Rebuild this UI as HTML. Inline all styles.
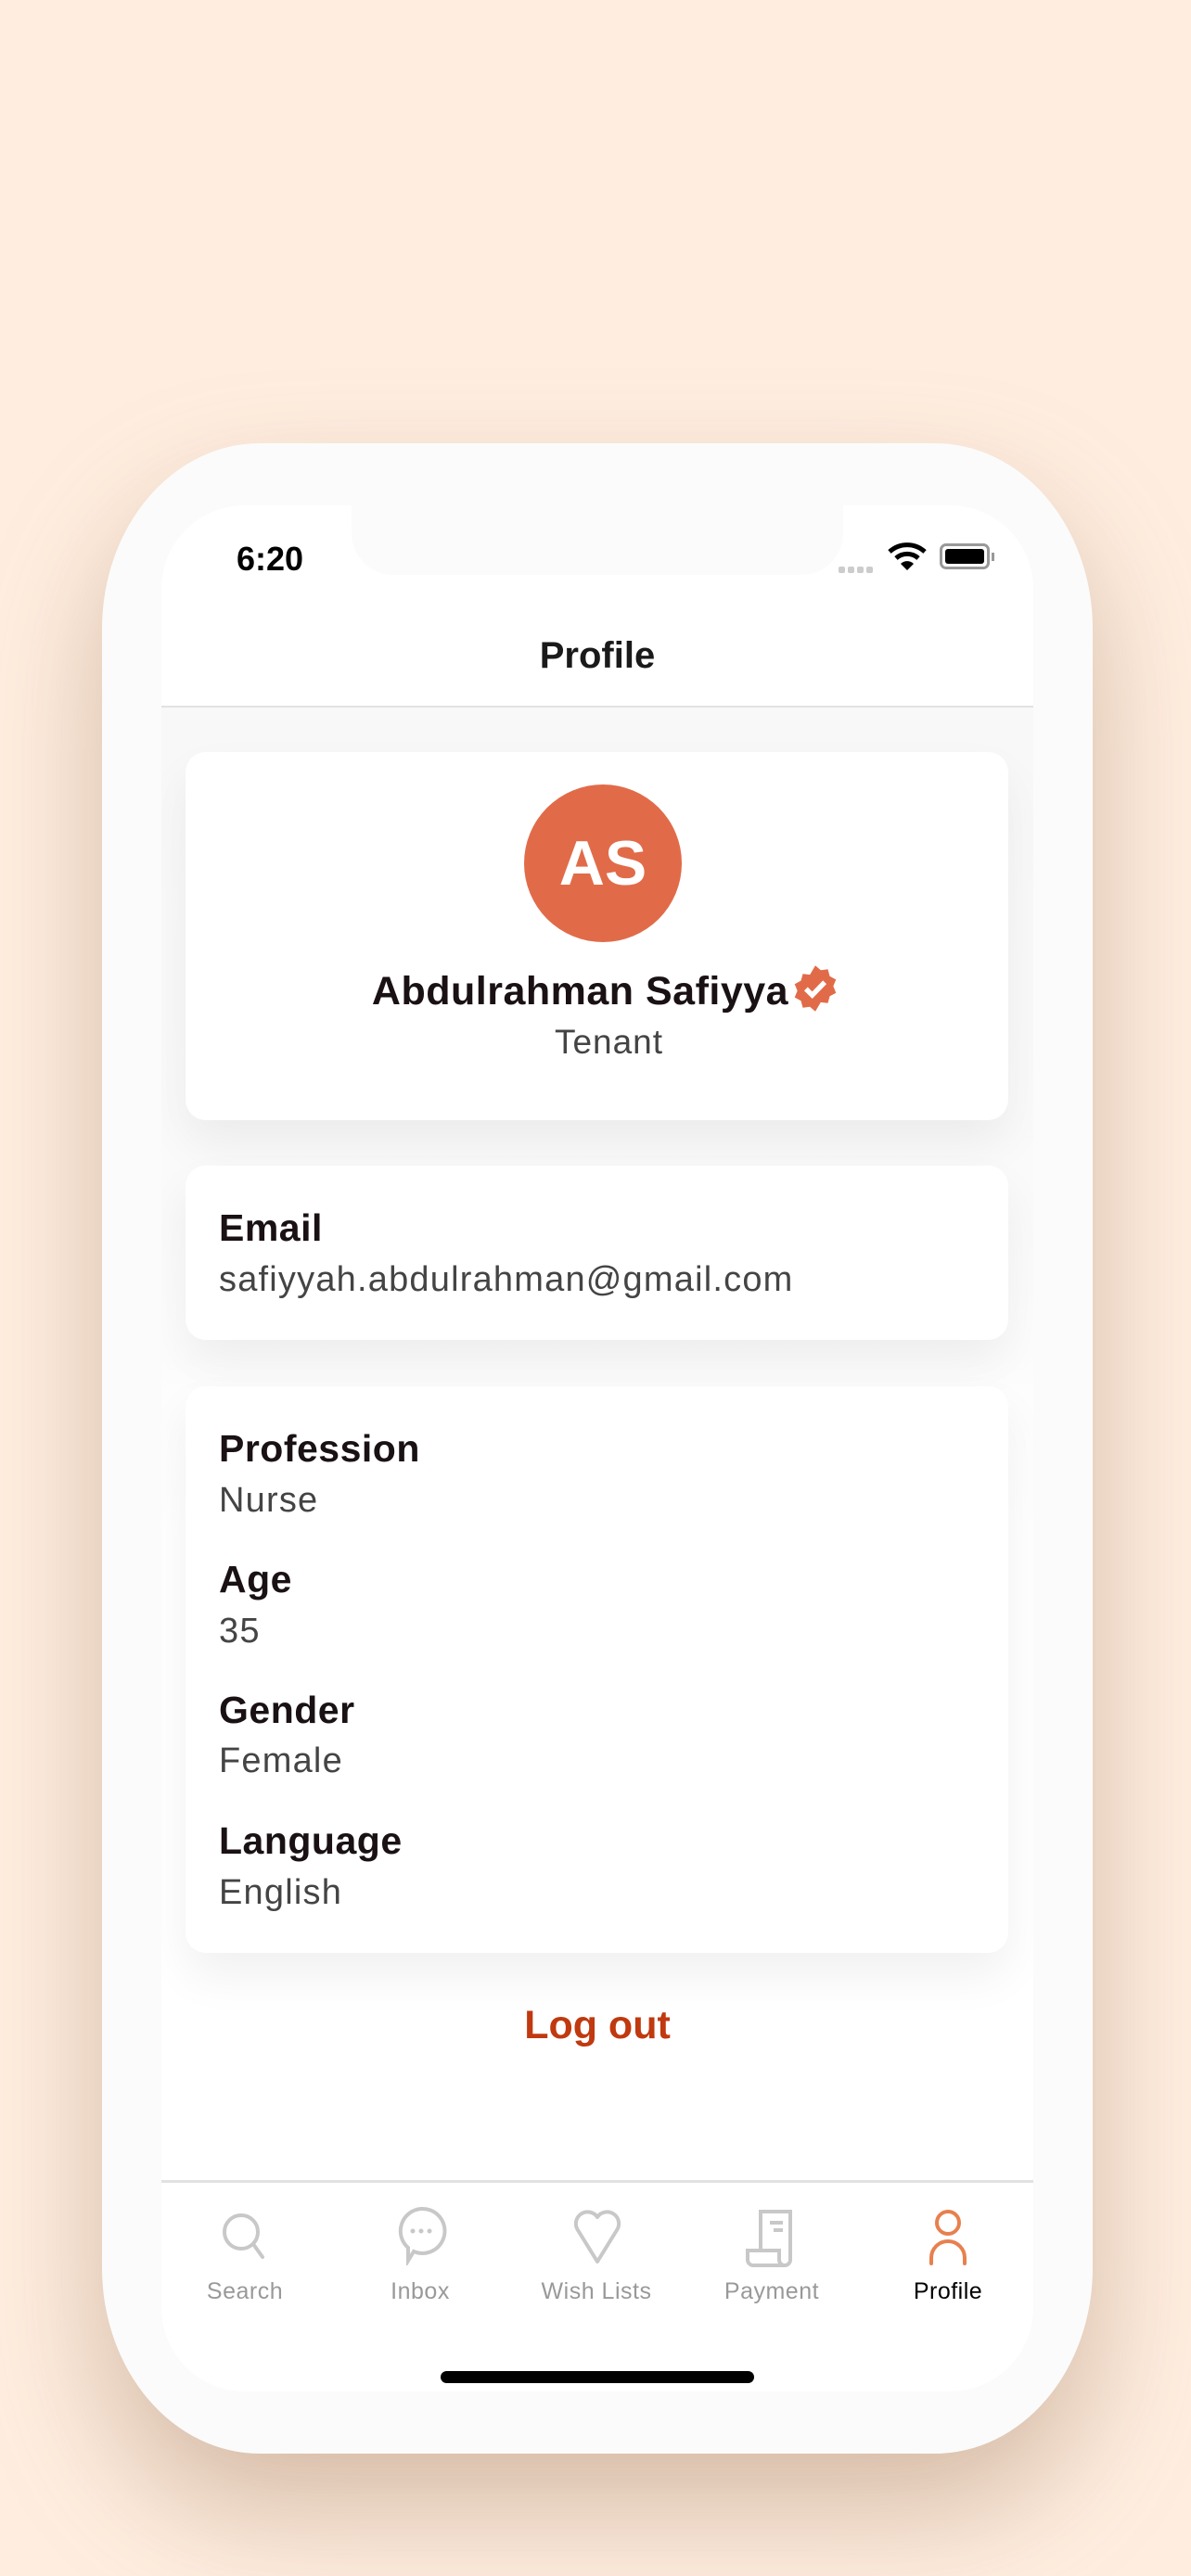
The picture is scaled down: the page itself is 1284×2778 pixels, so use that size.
<!DOCTYPE html>
<html><head><meta charset="utf-8"><style>
*{margin:0;padding:0;box-sizing:border-box}
body{width:1284px;height:2778px;background:#FFEEE0;font-family:"Liberation Sans",sans-serif;position:relative;overflow:hidden}
.phone{position:absolute;left:110px;top:478px;width:1068px;height:2168px;background:#FBFBFB;border-radius:170px/200px;box-shadow:0 60px 140px rgba(150,110,80,.4)}
.screen{position:absolute;left:174px;top:545px;width:940px;height:2034px;background:#FBFBFB;border-radius:90px;overflow:hidden}
.notch{position:absolute;left:205px;top:-5px;width:530px;height:80px;background:#FBFBFB;border-radius:0 0 45px 45px}
.card{position:absolute;left:26px;width:887px;background:#fff;border-radius:22px;box-shadow:0 25px 50px rgba(0,0,0,.06)}
.lab{position:absolute;left:36px;font-size:41px;font-weight:bold;color:#1a1114;letter-spacing:.5px}
.val{position:absolute;left:36px;font-size:38px;color:#444;letter-spacing:1.2px}
.tab{position:absolute;top:1912px;width:160px;text-align:center;font-size:25px;color:#999;margin-left:-80px;letter-spacing:.5px}
</style></head><body>
<div class="phone"></div>
<div class="screen">
  <div style="position:absolute;left:0;top:0;width:940px;height:2034px;background:#fff"></div>
  <div style="position:absolute;left:81px;top:37px;font-size:36px;font-weight:bold;color:#000">6:20</div>
  <div style="position:absolute;left:730px;top:60px;">
    <span style="display:inline-block;width:7px;height:7px;background:#ccc;border-radius:2px;margin-right:3px"></span><span style="display:inline-block;width:7px;height:7px;background:#ccc;border-radius:2px;margin-right:3px"></span><span style="display:inline-block;width:7px;height:7px;background:#ccc;border-radius:2px;margin-right:3px"></span><span style="display:inline-block;width:7px;height:7px;background:#ccc;border-radius:2px"></span>
  </div>
  <svg style="position:absolute;left:783px;top:38px" width="42" height="34" viewBox="0 0 42 34"><path d="M2 12 A28 28 0 0 1 40 12" stroke="#000" stroke-width="5" fill="none"/><path d="M9 19 A18 18 0 0 1 33 19" stroke="#000" stroke-width="5" fill="none"/><path d="M21 32 L14 25 A10 10 0 0 1 28 25 Z" fill="#000"/></svg>
  <div style="position:absolute;left:839px;top:41px;width:54px;height:28px;border:3px solid #999;border-radius:7px;padding:3px"><div style="width:100%;height:100%;background:#000;border-radius:3px"></div></div>
  <div style="position:absolute;left:895px;top:51px;width:3px;height:9px;background:#999"></div>
  <div class="notch"></div>
  <div style="position:absolute;left:0;width:940px;top:140px;text-align:center;font-size:40px;font-weight:bold;color:#1a1a1a">Profile</div>
  <div style="position:absolute;left:0;top:216px;width:940px;height:2px;background:#e2e2e2"></div>
  <div style="position:absolute;left:0;top:218px;width:940px;height:900px;background:linear-gradient(#f8f8f8,#fafafa 60%,#fff)"></div>

  <div class="card" style="top:266px;height:397px">
    <div style="position:absolute;left:365px;top:35px;width:170px;height:170px;border-radius:50%;background:#E16B49;color:#fff;font-size:68px;font-weight:bold;text-align:center;line-height:170px">AS</div>
    <div style="position:absolute;left:0;width:887px;top:228px;text-align:center;font-size:43px;font-weight:bold;color:#1a1114;letter-spacing:.5px;padding-left:20px"><span>Abdulrahman Safiyya</span><svg width="54" height="54" viewBox="0 0 24 24" style="vertical-align:-10px;margin-left:2px"><path d="M12 1l2.6 2.2 3.4-.4.9 3.3 3 1.6-1.3 3.2 1.3 3.2-3 1.6-.9 3.3-3.4-.4L12 23l-2.6-2.2-3.4.4-.9-3.3-3-1.6 1.3-3.2-1.3-3.2 3-1.6.9-3.3 3.4.4z" fill="#E16B49"/><path d="M7.5 12.2l3 3 6-6.2" stroke="#fff" stroke-width="2.4" fill="none"/></svg></div>
    <div style="position:absolute;left:0;width:887px;top:292px;text-align:center;font-size:37px;color:#444;padding-left:26px;letter-spacing:1px">Tenant</div>
  </div>

  <div class="card" style="top:712px;height:188px">
    <div class="lab" style="top:44px">Email</div>
    <div class="val" style="top:102px">safiyyah.abdulrahman@gmail.com</div>
  </div>

  <div class="card" style="top:950px;height:611px">
    <div class="lab" style="top:44px">Profession</div>
    <div class="val" style="top:102px">Nurse</div>
    <div class="lab" style="top:185px">Age</div>
    <div class="val" style="top:243px">35</div>
    <div class="lab" style="top:326px">Gender</div>
    <div class="val" style="top:383px">Female</div>
    <div class="lab" style="top:467px">Language</div>
    <div class="val" style="top:525px">English</div>
  </div>

  <div style="position:absolute;left:0;width:940px;top:1615px;text-align:center;font-size:43px;font-weight:bold;color:#C0390F">Log out</div>

  <div style="position:absolute;left:0;top:1806px;width:940px;height:3px;background:#e2e2e2"></div>

  <svg style="position:absolute;left:62px;top:1838px" width="60" height="60" viewBox="0 0 60 60"><circle cx="24" cy="24" r="18" stroke="#c8c8c8" stroke-width="4" fill="none"/><path d="M37 37l10 14" stroke="#c8c8c8" stroke-width="4" stroke-linecap="round"/></svg>
  <svg style="position:absolute;left:250px;top:1832px" width="60" height="66" viewBox="0 0 60 66"><path d="M30 5a24 24 0 1 1-8 46l-6 10 0-14a24 24 0 0 1 14-42z" stroke="#c8c8c8" stroke-width="4" fill="none"/><circle cx="21" cy="29" r="2.5" fill="#c8c8c8"/><circle cx="30" cy="29" r="2.5" fill="#c8c8c8"/><circle cx="39" cy="29" r="2.5" fill="#c8c8c8"/></svg>
  <svg style="position:absolute;left:440px;top:1838px" width="60" height="60" viewBox="0 0 60 60"><path d="M30 56L9 22a12 12 0 0 1 21-14a12 12 0 0 1 21 14z" stroke="#c8c8c8" stroke-width="4" fill="none" stroke-linejoin="round"/></svg>
  <svg style="position:absolute;left:628px;top:1836px" width="60" height="64" viewBox="0 0 60 64"><path d="M18 44V4h32v52a6 6 0 0 1-6 6H10a6 6 0 0 1-6-6v-10h34v10a6 6 0 0 0 6 6" stroke="#c8c8c8" stroke-width="4" fill="none"/><path d="M28 16h14M32 24h10" stroke="#c8c8c8" stroke-width="4"/></svg>
  <svg style="position:absolute;left:818px;top:1836px" width="60" height="64" viewBox="0 0 60 64"><circle cx="30" cy="16" r="12" stroke="#E8804E" stroke-width="4" fill="none"/><path d="M12 60v-6a18 18 0 0 1 36 0v6" stroke="#E8804E" stroke-width="4" fill="none" stroke-linecap="round"/></svg>

  <div class="tab" style="left:90px">Search</div>
  <div class="tab" style="left:279px">Inbox</div>
  <div class="tab" style="left:469px">Wish Lists</div>
  <div class="tab" style="left:658px">Payment</div>
  <div class="tab" style="left:848px;color:#000">Profile</div>

  <div style="position:absolute;left:301px;top:2012px;width:338px;height:13px;border-radius:7px;background:#000"></div>
</div>
</body></html>
